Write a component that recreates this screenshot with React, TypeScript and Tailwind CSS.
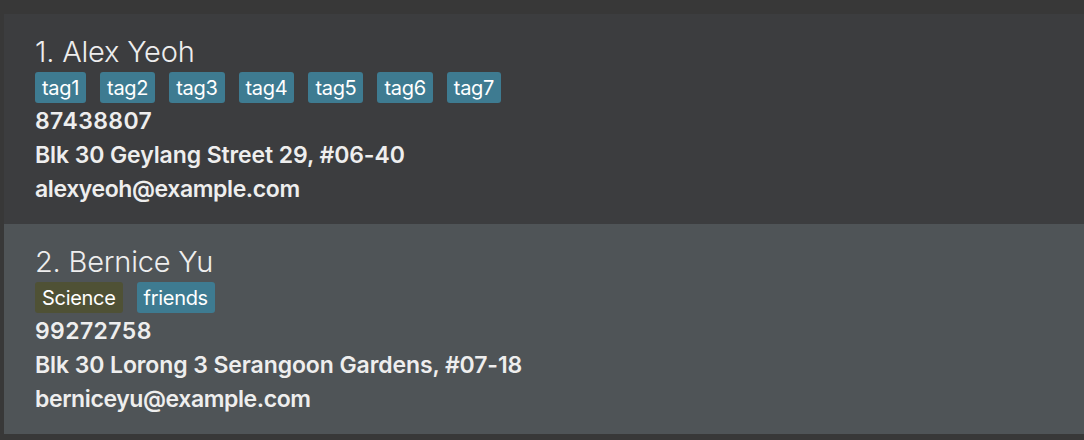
import React from "react";

type Person = {
  name: string;
  tags: { label: string; color: string }[];
  phone: string;
  address: string;
  email: string;
};

const people: Person[] = [
  {
    name: "Alex Yeoh",
    tags: ["tag1", "tag2", "tag3", "tag4", "tag5", "tag6", "tag7"].map((t) => ({ label: t, color: "bg-[#3e7b91]" })),
    phone: "87438807",
    address: "Blk 30 Geylang Street 29, #06-40",
    email: "alexyeoh@example.com",
  },
  {
    name: "Bernice Yu",
    tags: [
      { label: "Science", color: "bg-[#4f5135]" },
      { label: "friends", color: "bg-[#3e7b91]" },
    ],
    phone: "99272758",
    address: "Blk 30 Lorong 3 Serangoon Gardens, #07-18",
    email: "berniceyu@example.com",
  },
];

function PersonCard({ person, index }: { person: Person; index: number }) {
  const bg = index % 2 === 0 ? "bg-[#3c3d3f]" : "bg-[#4f5457]";
  return (
    <div className={`${bg} h-[210px] pl-[31px] pt-[20px] flex flex-col text-[#eeeeee] font-['Inter',sans-serif]`}>
      <div className="text-[29px] leading-[36px] font-light tracking-[-0.2px]">
        {index + 1}. {person.name}
      </div>
      <div className="flex gap-[14px] mt-[2px]">
        {person.tags.map((t) => (
          <span
            key={t.label}
            className={`${t.color} h-[31px] px-[7px] rounded-[3px] flex items-center text-[20px] text-white tracking-[-0.3px]`}
          >
            {t.label}
          </span>
        ))}
      </div>
      <div className="mt-px font-semibold text-[23px] leading-[34px] tracking-[-0.1px]">
        <div className="tracking-[0.4px]">{person.phone}</div>
        <div>{person.address}</div>
        <div className="tracking-[-0.4px]">{person.email}</div>
      </div>
    </div>
  );
}

export default function App() {
  return (
    <div className="w-[1084px] h-[440px] bg-[#383838] pt-[14px] pl-[4px] overflow-hidden">
      {people.map((p, i) => (
        <PersonCard key={p.name} person={p} index={i} />
      ))}
    </div>
  );
}
